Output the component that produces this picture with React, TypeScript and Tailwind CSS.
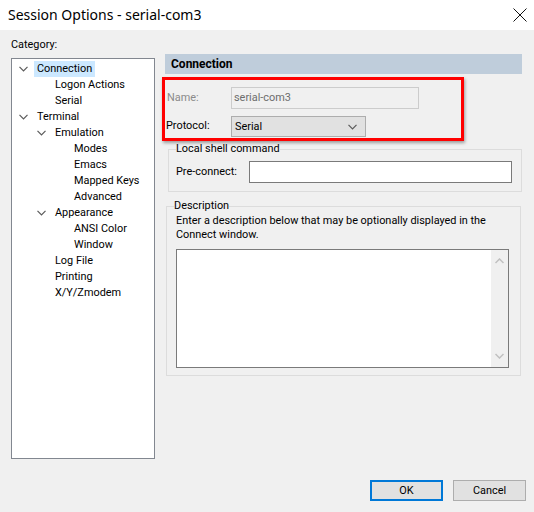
import React from "react";

type Node = { label: string; depth: number; open?: boolean; selected?: boolean };

const tree: Node[] = [
  { label: "Connection", depth: 0, open: true, selected: true },
  { label: "Logon Actions", depth: 1 },
  { label: "Serial", depth: 1 },
  { label: "Terminal", depth: 0, open: true },
  { label: "Emulation", depth: 1, open: true },
  { label: "Modes", depth: 2 },
  { label: "Emacs", depth: 2 },
  { label: "Mapped Keys", depth: 2 },
  { label: "Advanced", depth: 2 },
  { label: "Appearance", depth: 1, open: true },
  { label: "ANSI Color", depth: 2 },
  { label: "Window", depth: 2 },
  { label: "Log File", depth: 1 },
  { label: "Printing", depth: 1 },
  { label: "X/Y/Zmodem", depth: 1 },
];

function Chevron({ className = "" }: { className?: string }) {
  return (
    <svg width="9" height="6" viewBox="0 0 9 6" className={className}>
      <path d="M0.5 0.8 L4.5 4.8 L8.5 0.8" fill="none" stroke="#5b5b5b" strokeWidth="1.2" />
    </svg>
  );
}

function TreeRow({ node }: { node: Node }) {
  // label x: depth0 = 37, depth1 = 55, depth2 = 74
  const pad = node.depth === 0 ? "pl-[7px]" : node.depth === 1 ? "pl-[25px]" : "pl-[44px]";
  return (
    <div className={`flex items-center h-[16px] ${pad}`}>
      <div className="w-[18px] flex items-center justify-start">
        {node.open ? <Chevron /> : null}
      </div>
      <span
        className={`leading-[16px] px-[3px] -ml-[3px] ${node.selected ? "bg-[#cce8ff]" : ""}`}
      >
        {node.label}
      </span>
    </div>
  );
}

export default function App() {
  return (
    <div
      className="w-[534px] h-[512px] bg-[#f0f0f0] text-[10.9px] text-black flex flex-col overflow-hidden"
      style={{ fontFamily: 'Roboto, "Liberation Sans", sans-serif' }}
    >
      {/* title bar */}
      <div className="h-[30px] bg-white flex items-center justify-between pl-[8px] pr-[6px] shrink-0">
        <span
          className="text-[14px] leading-[30px]"
          style={{ fontFamily: '"Noto Sans", sans-serif' }}
        >
          Session Options - serial-com3
        </span>
        <svg width="14" height="14" viewBox="0 0 14 14" className="mr-[1px]">
          <path d="M0.5 0.5 L13.5 13.5 M13.5 0.5 L0.5 13.5" stroke="#111" strokeWidth="1" />
        </svg>
      </div>

      <div className="flex items-start">
        {/* left column */}
        <div className="w-[165px] pl-[11px] shrink-0">
          <div className="pt-[7px] leading-[16px]">Category:</div>
          <div className="mt-[5px] w-[144px] h-[401px] bg-white border border-[#828790] pt-[2px]">
            {tree.map((n) => (
              <TreeRow key={n.label} node={n} />
            ))}
          </div>
        </div>

        {/* right column */}
        <div className="w-[357px] pt-[24px] relative">
          <div className="h-[20px] bg-[#bfcddb] pl-[6px] font-bold text-[12px] leading-[20px]">Connection</div>

          <div className="mt-[13px] flex items-center h-[22px]">
            <span className="w-[66px] pl-[2px] text-[#8b8b8b]">Name:</span>
            <div className="w-[188px] h-[22px] border border-[#cccccc] bg-[#f0f0f0] pl-[2px] leading-[20px] text-[#6d6d6d]">
              serial-com3
            </div>
          </div>

          <div className="mt-[7px] flex items-center h-[21px]">
            <span className="w-[66px] pl-[1px]">Protocol:</span>
            <div className="w-[135px] h-[21px] border border-[#adadad] bg-[#e1e1e1] pl-[3px] pr-[8px] flex items-center justify-between">
              <span className="leading-[19px]">Serial</span>
              <Chevron />
            </div>
          </div>

          {/* annotation highlight */}
          <div className="absolute left-[-3px] top-[47px] w-[302px] h-[64px] border-[3px] border-[#ff0000] shadow-[1px_2px_3px_rgba(0,0,0,0.35)] pointer-events-none" />

          {/* Local shell command */}
          <fieldset className="mt-[4px] ml-[3px] w-[354px] h-[51px] border border-[#dcdcdc] px-[7px]">
            <legend className="leading-[16px] px-0">Local shell command</legend>
            <div className="flex items-center mt-[4px]">
              <span className="w-[73px]">Pre-connect:</span>
              <div className="w-[263px] h-[22px] bg-white border border-[#7a7a7a]" />
            </div>
          </fieldset>

          {/* Description */}
          <fieldset className="mt-[6px] ml-[1px] w-[355px] h-[178px] border border-[#dcdcdc] pl-[7px]">
            <legend className="leading-[16px] px-0">Description</legend>
            <div className="pl-[2px] leading-[14px]">
              Enter a description below that may be optionally displayed in the
              <br />
              Connect window.
            </div>
            <div className="mt-[7px] ml-[2px] w-[333px] h-[119px] bg-white border border-[#7a7a7a] flex justify-end">
              <div className="w-[17px] h-full bg-[#f0f0f0] flex flex-col items-center justify-between py-[8px]">
                <svg width="9" height="6" viewBox="0 0 9 6">
                  <path d="M0.5 5 L4.5 1 L8.5 5" fill="none" stroke="#c0c0c0" strokeWidth="1.5" />
                </svg>
                <svg width="9" height="6" viewBox="0 0 9 6">
                  <path d="M0.5 1 L4.5 5 L8.5 1" fill="none" stroke="#c0c0c0" strokeWidth="1.5" />
                </svg>
              </div>
            </div>
          </fieldset>
        </div>
      </div>

      {/* footer */}
      <div className="flex justify-end gap-[10px] pr-[8px] mt-[21px]">
        <button className="w-[73px] h-[21px] bg-[#e1e1e1] border-2 border-[#0078d7] leading-[17px]">OK</button>
        <button className="w-[73px] h-[21px] bg-[#e1e1e1] border border-[#adadad] leading-[19px]">Cancel</button>
      </div>
    </div>
  );
}
